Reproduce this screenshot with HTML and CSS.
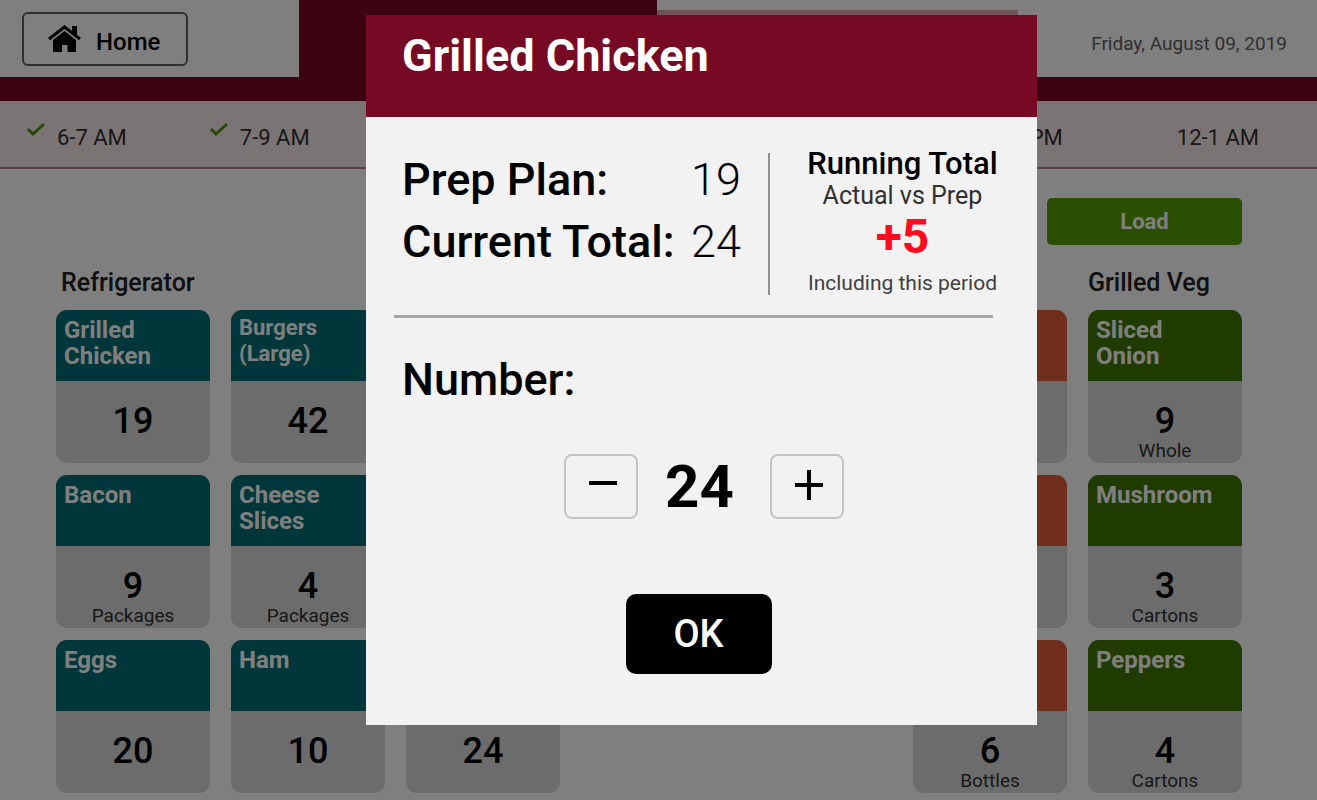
FILE: index.html
```html
<!DOCTYPE html>
<html lang="en">
<head>
    <meta charset="UTF-8">
    <meta name="viewport" content="width=device-width, initial-scale=1.0">
    <title>Grilled Chicken</title>
    <link rel="stylesheet" href="styles.css">
</head>
<body>
    <header class="topbar">
        <div class="topbar-home">
            <button class="btn-home" type="button">
                <svg width="33" height="27" viewBox="0 0 33 27" aria-hidden="true">
                    <path d="M1 14 L16.500 2 L32 14" fill="none" stroke="#000" stroke-width="3"/>
                    <path d="M24 1h5v10l-5-4z"/>
                    <path d="M5 15 L16.500 6 L28 15 V27 H19.500 V20 H14 V27 H5z"/>
                </svg>
                Home
            </button>
        </div>
        <div class="tab tab-active"></div>
        <div class="tab"></div>
        <div class="topbar-date">Friday, August 09, 2019</div>
    </header>

    <nav class="periods">
        <a class="period" href="#">
            <svg class="check" width="20" height="15" viewBox="0 0 20 15" aria-hidden="true"><path d="M2 7l5 5L18 2"/></svg>
            6-7 AM
        </a>
        <a class="period" href="#">
            <svg class="check" width="20" height="15" viewBox="0 0 20 15" aria-hidden="true"><path d="M2 7l5 5L18 2"/></svg>
            7-9 AM
        </a>
        <a class="period period-late" href="#">PM</a>
        <a class="period period-last" href="#">12-1 AM</a>
    </nav>

    <main class="board">
        <div class="toolbar">
            <button class="btn-load" type="button">Load</button>
        </div>

        <div class="stations">
            <section class="station station-fridge">
                <h2>Refrigerator</h2>
                <div class="cards">
                    <div class="card"><h3>Grilled<br>Chicken</h3><p class="count">19</p></div>
                    <div class="card"><h3 class="small">Burgers<br>(Large)</h3><p class="count">42</p></div>
                    <div class="card"><h3></h3></div>
                    <div class="card"><h3>Bacon</h3><p class="count">9</p><p class="unit">Packages</p></div>
                    <div class="card"><h3>Cheese<br>Slices</h3><p class="count">4</p><p class="unit">Packages</p></div>
                    <div class="card"><h3></h3></div>
                    <div class="card"><h3>Eggs</h3><p class="count">20</p></div>
                    <div class="card"><h3>Ham</h3><p class="count">10</p></div>
                    <div class="card"><h3></h3><p class="count">24</p></div>
                </div>
            </section>

            <section class="station station-sauce">
                <h2></h2>
                <div class="cards">
                    <div class="card"><h3></h3></div>
                    <div class="card"><h3></h3></div>
                    <div class="card"><h3></h3><p class="count">6</p><p class="unit">Bottles</p></div>
                </div>
            </section>

            <section class="station station-veg">
                <h2>Grilled Veg</h2>
                <div class="cards">
                    <div class="card"><h3>Sliced<br>Onion</h3><p class="count">9</p><p class="unit">Whole</p></div>
                    <div class="card"><h3>Mushroom</h3><p class="count">3</p><p class="unit">Cartons</p></div>
                    <div class="card"><h3>Peppers</h3><p class="count">4</p><p class="unit">Cartons</p></div>
                </div>
            </section>
        </div>
    </main>

    <div class="overlay">
        <div class="modal" role="dialog" aria-labelledby="modalTitle">
            <h1 id="modalTitle" class="modal-title">Grilled Chicken</h1>

            <div class="summary">
                <dl class="totals">
                    <dt>Prep Plan:</dt>
                    <dd>19</dd>
                    <dt>Current Total:</dt>
                    <dd>24</dd>
                </dl>
                <div class="running">
                    <h2>Running Total</h2>
                    <p class="running-sub">Actual vs Prep</p>
                    <p class="running-diff">+5</p>
                    <p class="running-note">Including this period</p>
                </div>
            </div>

            <div class="entry">
                <h2 id="numberLabel">Number:</h2>
                <div class="stepper" role="group" aria-labelledby="numberLabel">
                    <button class="step" type="button" id="minus" aria-label="Decrease">
                        <svg width="28" height="30" viewBox="0 0 28 30" aria-hidden="true"><path d="M0 13h28"/></svg>
                    </button>
                    <output id="number">24</output>
                    <button class="step" type="button" id="plus" aria-label="Increase">
                        <svg width="28" height="30" viewBox="0 0 28 30" aria-hidden="true"><path d="M0 15h28M14 0v30"/></svg>
                    </button>
                </div>
                <button class="btn-ok" type="button">OK</button>
            </div>
        </div>
    </div>

    <script>
        const number = document.getElementById('number');

        function step(amount) {
            number.textContent = Math.max(0, parseInt(number.textContent, 10) + amount);
        }

        document.getElementById('minus').onclick = () => step(-1);
        document.getElementById('plus').onclick = () => step(1);
    </script>
</body>
</html>
```
FILE: styles.css
```css
* {
    margin: 0;
    padding: 0;
    box-sizing: border-box;
}

body {
    font-family: Roboto, "Liberation Sans", sans-serif;
    background-color: #ffffff;
    color: #000000;
}

button {
    font-family: inherit;
    cursor: pointer;
}

/* Top bar */
.topbar {
    display: grid;
    grid-template-columns: 299fr 358fr 361fr 299fr;
    height: 101px;
    border-bottom: 24px solid #780622;
}

.topbar-home {
    padding: 12px 22px;
}

.btn-home {
    display: flex;
    align-items: center;
    gap: 15px;
    height: 54px;
    padding: 6px 26px 0 24px;
    background: none;
    border: 2px solid #606060;
    border-radius: 6px;
    font-size: 24px;
    font-weight: 500;
}

.btn-home svg {
    margin-bottom: 8px;
}

.tab {
    margin-top: 10px;
    border-top: 6px solid #dba5b1;
}

.tab-active {
    margin-top: 0;
    border: none;
    background-color: #780622;
}

.topbar-date {
    padding: 32px 30px 0 0;
    font-size: 19px;
    line-height: 24px;
    text-align: right;
    white-space: nowrap;
    color: #606060;
}

/* Periods */
.periods {
    display: flex;
    align-items: center;
    height: 68px;
    padding: 0 58px 0 26px;
    background-color: #f4e8ea;
    border-bottom: 2px solid #b08090;
}

.period {
    display: flex;
    align-items: center;
    gap: 11px;
    margin-right: 82px;
    padding-top: 6px;
    font-size: 22px;
    color: #303030;
    text-decoration: none;
}

.period-late {
    margin-left: auto;
    margin-right: 114px;
}

.period-last {
    margin-right: 0;
}

.check {
    margin-bottom: 16px;
    fill: none;
    stroke: #4a9010;
    stroke-width: 3;
}

/* Board */
.board {
    padding: 29px 75px 0 56px;
}

.toolbar {
    display: flex;
    justify-content: flex-end;
    margin-bottom: 23px;
}

.btn-load {
    width: 195px;
    height: 47px;
    background-color: #569e00;
    border: none;
    border-radius: 5px;
    font-size: 22px;
    font-weight: 700;
    color: #ffffff;
}

.stations {
    display: grid;
    grid-template-columns: 504fr 311fr 154fr 154fr;
    gap: 21px;
}

.station-sauce {
    grid-column: 3;
}

.station h2 {
    height: 30px;
    margin-bottom: 12px;
    padding-left: 5px;
    font-size: 25px;
    font-weight: 500;
    line-height: 30px;
    white-space: nowrap;
    color: #202020;
}

.station-veg h2 {
    padding-left: 0;
}

.cards {
    display: grid;
    gap: 12px 21px;
}

.station-fridge .cards {
    grid-template-columns: repeat(3, 1fr);
}

.card {
    height: 153px;
    border-radius: 11px;
    background-color: #d8d8d8;
    overflow: hidden;
    text-align: center;
}

.card h3 {
    height: 71px;
    margin-bottom: 20px;
    padding: 7px 8px;
    font-size: 24px;
    font-weight: 700;
    line-height: 26px;
    text-align: left;
    color: #ffffff;
    background-color: #026e76;
}

.card .small {
    padding-top: 5px;
    font-size: 22px;
}

.station-sauce .card h3 {
    background-color: #e05c38;
}

.station-veg .card h3 {
    background-color: #3e7600;
}

.count {
    font-size: 36px;
    font-weight: 500;
    line-height: 40px;
}

.unit {
    font-size: 19px;
    line-height: 20px;
    color: #303030;
}

/* Modal */
.overlay {
    position: fixed;
    inset: 0;
    display: flex;
    align-items: flex-start;
    padding: 15px 280px 0 366px;
    background-color: rgba(0, 0, 0, 0.5);
}

.modal {
    flex: 1;
    padding-bottom: 51px;
    background-color: #f2f2f2;
}

.modal-title {
    height: 102px;
    padding: 16px 36px;
    font-size: 45px;
    font-weight: 700;
    line-height: 50px;
    color: #ffffff;
    background-color: #760a25;
}

.summary {
    display: flex;
    margin: 0 44px 0 28px;
    padding: 32px 0 20px 8px;
    border-bottom: 3px solid #a4a4a4;
}

.totals {
    display: grid;
    grid-template-columns: auto 1fr;
    grid-auto-rows: 62px;
    flex: 1;
    padding-right: 27px;
    font-size: 45px;
    line-height: 62px;
    white-space: nowrap;
}

.totals dt {
    font-weight: 500;
}

.totals dd {
    font-weight: 300;
    text-align: right;
}

.running {
    width: 233px;
    height: 142px;
    margin-top: 4px;
    margin-right: -8px;
    padding-left: 34px;
    border-left: 2px solid #909090;
    text-align: center;
    white-space: nowrap;
}

.running h2 {
    font-size: 31px;
    font-weight: 500;
    line-height: 22px;
}

.running-sub {
    font-size: 25px;
    line-height: 42px;
    color: #303030;
}

.running-diff {
    font-size: 48px;
    font-weight: 700;
    line-height: 40px;
    color: #ff0c20;
}

.running-note {
    font-size: 21px;
    line-height: 52px;
    color: #404040;
}

.entry {
    display: flex;
    flex-direction: column;
    align-items: center;
    padding: 37px 32px 0 36px;
}

.entry h2 {
    align-self: flex-start;
    margin-bottom: 49px;
    font-size: 45px;
    font-weight: 500;
    line-height: 50px;
}

.stepper {
    display: flex;
    align-items: center;
    margin-bottom: 75px;
}

.step {
    display: flex;
    align-items: center;
    justify-content: center;
    width: 74px;
    height: 65px;
    padding: 0 0 4px 4px;
    background: none;
    border: 2px solid #c4c4c4;
    border-radius: 8px;
}

.step svg {
    fill: none;
    stroke: #000000;
    stroke-width: 4;
}

.stepper output {
    width: 132px;
    padding-right: 8px;
    font-size: 60px;
    font-weight: 700;
    line-height: 64px;
    text-align: center;
}

.btn-ok {
    width: 146px;
    height: 80px;
    margin-right: 10px;
    background-color: #000000;
    border: none;
    border-radius: 10px;
    font-size: 38px;
    font-weight: 500;
    color: #ffffff;
}
```
